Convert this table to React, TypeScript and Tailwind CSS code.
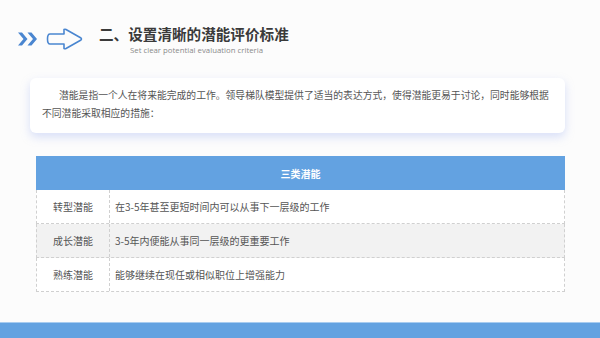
const rows = [
  { name: '转型潜能', desc: '在3-5年甚至更短时间内可以从事下一层级的工作', bg: 'bg-white' },
  { name: '成长潜能', desc: '3-5年内便能从事同一层级的更重要工作', bg: 'bg-[#f2f2f2]' },
  { name: '熟练潜能', desc: '能够继续在现任或相似职位上增强能力', bg: 'bg-white' },
];

const font = { fontFamily: '"Noto Sans CJK SC", "Noto Sans", sans-serif' };

export default function App() {
  return (
    <div className="flex h-[338px] w-[600px] flex-col overflow-hidden bg-[#fcfcfc]" style={font}>
      <div className="flex h-[78px] items-start pl-[18px] pt-[24px]">
        <svg width="66" height="22" viewBox="0 0 66 22" className="mt-[4px]">
          <path d="M0 4.5 L4 4.5 L9.5 11 L4 17.5 L0 17.5 L5.5 11 Z" fill="#4a86d0" />
          <path d="M9.5 4.5 L13.5 4.5 L19 11 L13.5 17.5 L9.5 17.5 L15 11 Z" fill="#4a86d0" />
          <path
            d="M32 6 L46 6 L46 1.5 Q47 1 48 1.5 L63 10 Q64 11 63 12 L48 20.5 Q47 21 46 20.5 L46 16 L32 16 Q29.5 16 29.5 11 Q29.5 6 32 6 Z"
            fill="none"
            stroke="#4a86d0"
            strokeWidth="1.6"
            strokeLinejoin="round"
          />
        </svg>
        <div className="ml-[15px] flex flex-col items-start">
          <div className="text-[14.6px] font-bold leading-[20px] text-[#3a3a3a]">
            二、设置清晰的潜能评价标准
          </div>
          <div className="ml-[31px] mt-[1px] text-[7.8px] leading-[10px] text-[#8a8a8a]" style={{ fontFamily: '"Open Sans", sans-serif' }}>
            Set clear potential evaluation criteria
          </div>
        </div>
      </div>

      <div className="ml-[30px] h-[55px] w-[535px] rounded-[6px] bg-white px-[12px] pt-[8px] text-[9.8px] leading-[18px] text-[#555] shadow-[0_4px_10px_rgba(150,170,240,0.35)]">
        <p className="indent-[17px]">
          潜能是指一个人在将来能完成的工作。领导梯队模型提供了适当的表达方式，使得潜能更易于讨论，同时能够根据不同潜能采取相应的措施：
        </p>
      </div>

      <div className="ml-[36px] mt-[23px] w-[529px] text-[10px] text-[#555]">
        <div className="flex h-[34px] items-center justify-center bg-[#63a2e1] font-bold text-white">三类潜能</div>
        {rows.map((r) => (
          <div key={r.name} className={`flex h-[34px] border-x border-b border-dashed border-[#d0d0d0] ${r.bg}`}>
            <div className="flex w-[73px] items-center justify-center border-r border-dashed border-[#d0d0d0]">{r.name}</div>
            <div className="flex items-center pl-[5px]">{r.desc}</div>
          </div>
        ))}
      </div>

      <div className="mt-auto h-[16px] border-t border-[#a8ccf0] bg-[#63a2e1]" />
    </div>
  );
}
